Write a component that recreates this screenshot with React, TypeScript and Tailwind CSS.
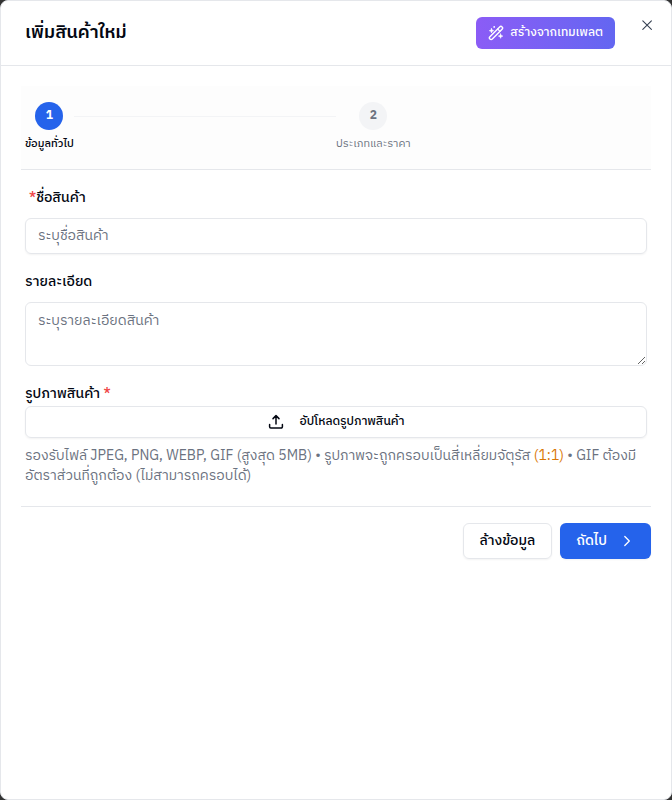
import { useState } from "react";

const steps = [
  { id: 1, label: "ข้อมูลทั่วไป" },
  { id: 2, label: "ประเภทและราคา" },
];

function WandIcon() {
  return (
    <svg width="16" height="16" viewBox="0 0 16 16" fill="none" stroke="currentColor" strokeLinecap="round" strokeLinejoin="round" aria-hidden="true">
      <rect x="-0.6" y="6.3" width="17.2" height="3.4" rx="1.7" strokeWidth="1.4" transform="rotate(-45 8 8)" />
      <path d="m9.6 4 2.4 2.4" strokeWidth="1.1" />
      <path
        d="m3.5 3.5.6 1.6 1.6.6-1.6.6-.6 1.6-.6-1.6-1.6-.6 1.6-.6zM12.6 8.9l.6 1.6 1.6.6-1.6.6-.6 1.6-.6-1.6-1.6-.6 1.6-.6z"
        fill="currentColor"
        strokeWidth="0.6"
      />
      <circle cx="6.2" cy="1.9" r="0.9" fill="currentColor" stroke="none" />
    </svg>
  );
}

function CloseIcon() {
  return (
    <svg width="16" height="16" viewBox="0 0 16 16" fill="none" stroke="currentColor" strokeWidth="1.1" strokeLinecap="round" aria-hidden="true">
      <path d="m3.8 3.8 8.6 8.6M12.4 3.8l-8.6 8.6" />
    </svg>
  );
}

function UploadIcon() {
  return (
    <svg width="16" height="16" viewBox="0 0 16 16" fill="none" stroke="currentColor" strokeWidth="1.5" strokeLinecap="round" strokeLinejoin="round" aria-hidden="true">
      <path d="M8 10V1.8M5 4.6l3-3 3 3M1.6 10.5v2.3A1.2 1.2 0 0 0 2.8 14h10.4a1.2 1.2 0 0 0 1.2-1.2v-2.3" />
    </svg>
  );
}

export default function App() {
  const [activeStep, setActiveStep] = useState(1);
  const [name, setName] = useState("");
  const [description, setDescription] = useState("");

  function clearForm() {
    setName("");
    setDescription("");
    setActiveStep(1);
  }

  return (
    <div className="min-h-screen bg-[#333333] font-['IBM_Plex_Sans_Thai','Noto_Sans_Thai','Noto_Sans',sans-serif] text-sm text-gray-950">
      <div role="dialog" aria-labelledby="dialog-title" className="relative min-h-screen rounded-lg border border-[#e5e7eb] bg-white">
        <header className="flex h-[65px] items-center justify-between border-b border-[#e5e7eb] pr-14 pl-6">
          <h1 id="dialog-title" className="text-lg font-semibold">
            เพิ่มสินค้าใหม่
          </h1>
          <button
            type="button"
            className="flex h-8 items-center gap-1.5 rounded-md bg-linear-to-r from-[#8b5cf6] to-[#6366f1] px-3 text-xs font-medium text-white"
          >
            <WandIcon />
            สร้างจากเทมเพลต
          </button>
        </header>
        <button type="button" aria-label="ปิด" className="absolute top-4 right-4 text-gray-700">
          <CloseIcon />
        </button>

        <form className="px-5 pt-5" onSubmit={(event) => event.preventDefault()}>
          <ol className="flex border-b border-[#e5e7eb] bg-[#fdfdfd] px-1 py-4">
            {steps.map((step, index) => (
              <li key={step.id} className="flex flex-1">
                <div className="flex flex-col items-center gap-1.5">
                  <span
                    className={
                      step.id === activeStep
                        ? "flex size-7 items-center justify-center rounded-full bg-[#2563eb] text-xs font-bold text-white"
                        : "flex size-7 items-center justify-center rounded-full bg-gray-100 text-xs font-bold text-[#6b7280]"
                    }
                  >
                    {step.id}
                  </span>
                  <span
                    className={
                      step.id === activeStep
                        ? "text-[11px] leading-[17px] font-medium whitespace-nowrap"
                        : "text-[11px] leading-[17px] whitespace-nowrap text-[#6b7280]"
                    }
                  >
                    {step.label}
                  </span>
                </div>
                {index < steps.length - 1 ? <div className="mt-3.5 h-px flex-1 bg-gray-100" /> : null}
              </li>
            ))}
          </ol>

          <div className="px-1 pt-4 pb-5">
            <label htmlFor="product-name" className="block px-1 leading-6 font-medium">
              <span className="text-[#ef4444]">*</span>ชื่อสินค้า
            </label>
            <input
              id="product-name"
              value={name}
              onChange={(event) => setName(event.target.value)}
              placeholder="ระบุชื่อสินค้า"
              className="mt-2 block h-9 w-full rounded-md border border-[#e5e7eb] px-3 pb-0.5 shadow-xs placeholder:text-[#6b7280]"
            />

            <label htmlFor="product-description" className="mt-4 block leading-6 font-medium">
              รายละเอียด
            </label>
            <textarea
              id="product-description"
              value={description}
              onChange={(event) => setDescription(event.target.value)}
              placeholder="ระบุรายละเอียดสินค้า"
              className="mt-2 block h-16 w-full rounded-md border border-[#e5e7eb] px-3 py-2 placeholder:text-[#6b7280]"
            />

            <p className="mt-4 leading-6 font-medium">
              รูปภาพสินค้า <span className="text-[#ef4444]">*</span>
            </p>
            <button
              type="button"
              className="flex h-8 w-full items-center justify-center gap-4 rounded-md border border-[#e5e7eb] text-xs font-medium shadow-xs"
            >
              <UploadIcon />
              อัปโหลดรูปภาพสินค้า
            </button>
            <p className="mt-2 leading-5 text-[#6b7280]">
              รองรับไฟล์ JPEG, PNG, WEBP, GIF (สูงสุด 5MB) • รูปภาพจะถูกครอบเป็นสี่เหลี่ยมจัตุรัส{" "}
              <span className="text-[#d97706]">(1:1)</span> • GIF ต้องมีอัตราส่วนที่ถูกต้อง (ไม่สามารถครอบได้)
            </p>
          </div>

          <footer className="flex justify-end gap-2 border-t border-[#e5e7eb] pt-4">
            <button
              type="button"
              onClick={clearForm}
              className="h-9 rounded-md border border-[#e5e7eb] px-4 font-medium shadow-xs"
            >
              ล้างข้อมูล
            </button>
            <button
              type="button"
              onClick={() => setActiveStep(2)}
              className="flex h-9 items-center gap-3 rounded-md bg-[#2563eb] px-4 font-medium text-white shadow-xs"
            >
              ถัดไป
              <svg width="16" height="16" viewBox="0 0 16 16" fill="none" stroke="currentColor" strokeWidth="1.3" strokeLinecap="round" strokeLinejoin="round" aria-hidden="true">
                <path d="m5.8 3.5 4.5 4.5-4.5 4.5" />
              </svg>
            </button>
          </footer>
        </form>
      </div>
    </div>
  );
}
